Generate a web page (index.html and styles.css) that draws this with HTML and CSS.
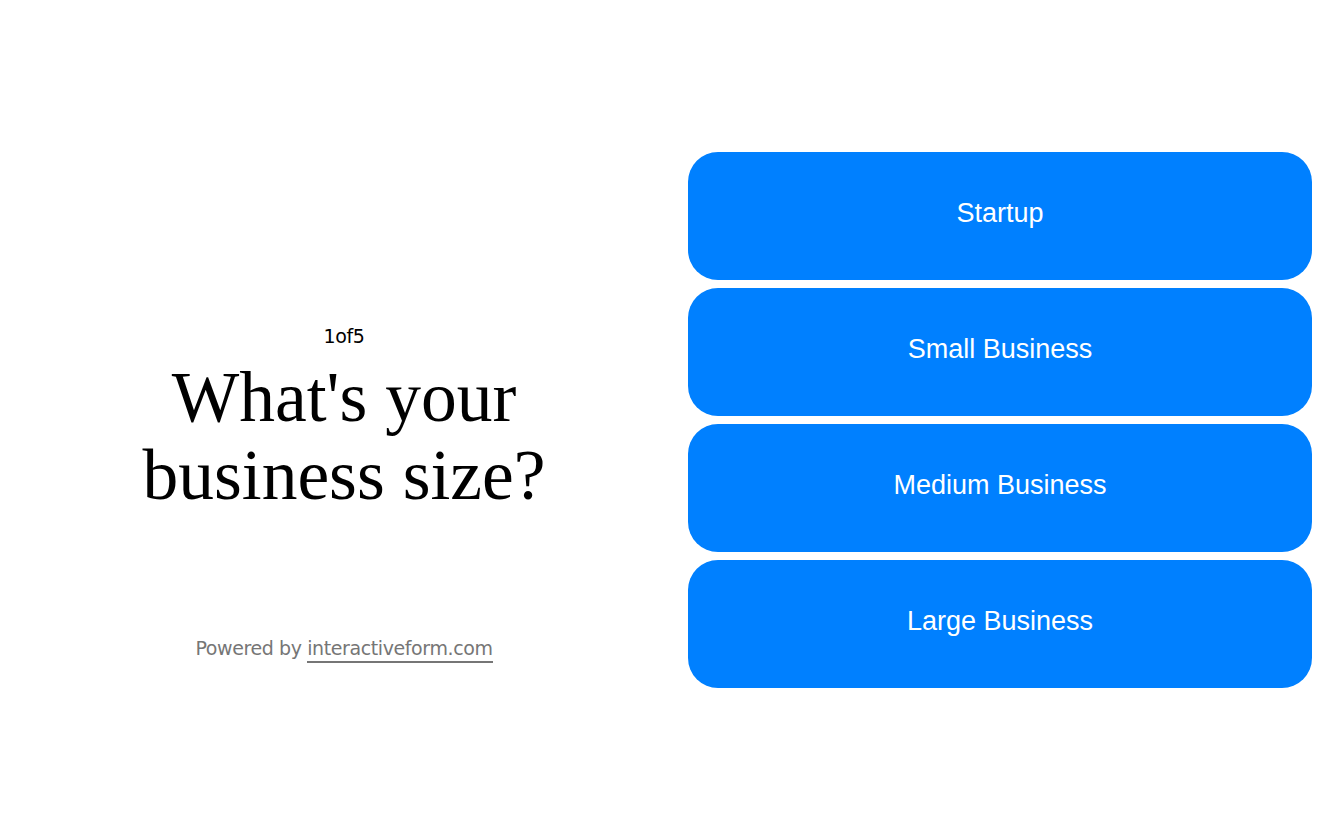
FILE: index.html
```html
<!DOCTYPE html>
<html lang="en">
<head>
<meta charset="utf-8">
<title>What's your business size?</title>
<link rel="stylesheet" href="styles.css">
</head>
<body>
<main class="page">
  <section class="intro">
    <div class="question">
      <div class="step">1of5</div>
      <h1 class="title">What's your<br>business size?</h1>
    </div>
    <div class="footer">Powered by <a class="footer-link" href="#">interactiveform.com</a></div>
  </section>
  <section class="options">
    <button class="option">Startup</button>
    <button class="option">Small Business</button>
    <button class="option">Medium Business</button>
    <button class="option">Large Business</button>
  </section>
</main>
</body>
</html>
```
FILE: styles.css
```css
html, body {
  margin: 0;
  padding: 0;
  background: #ffffff;
}

.page {
  display: grid;
  grid-template-columns: 688px 1fr;
  height: 840px;
  box-sizing: border-box;
  padding: 152px 32px 152px 0;
}

.intro {
  display: grid;
  grid-template-rows: 1fr auto 1fr;
  justify-items: center;
}

.question {
  grid-row: 2;
  text-align: center;
}

.step {
  font-family: "DejaVu Sans", sans-serif;
  font-size: 19px;
  line-height: 21px;
  letter-spacing: -0.4px;
  color: #000000;
  margin-bottom: 11px;
}

.title {
  margin: 0;
  font-family: "Liberation Serif", "Times New Roman", serif;
  font-weight: normal;
  font-size: 71.5px;
  line-height: 78px;
  color: #000000;
}

.footer {
  grid-row: 3;
  align-self: end;
  margin-bottom: 29px;
  font-family: "DejaVu Sans", sans-serif;
  font-size: 19px;
  line-height: 21px;
  letter-spacing: -0.4px;
  color: #767676;
}

.footer-link {
  color: #767676;
  text-decoration: none;
  padding-bottom: 2px;
  border-bottom: 2px solid #767676;
}

.options {
  display: flex;
  flex-direction: column;
  gap: 8px;
}

.option {
  height: 128px;
  border: none;
  border-radius: 30px;
  background: #0080ff;
  color: #ffffff;
  font-family: "Liberation Sans", Arial, sans-serif;
  font-size: 27px;
  padding: 0 0 6px 0;
  cursor: pointer;
}
```
